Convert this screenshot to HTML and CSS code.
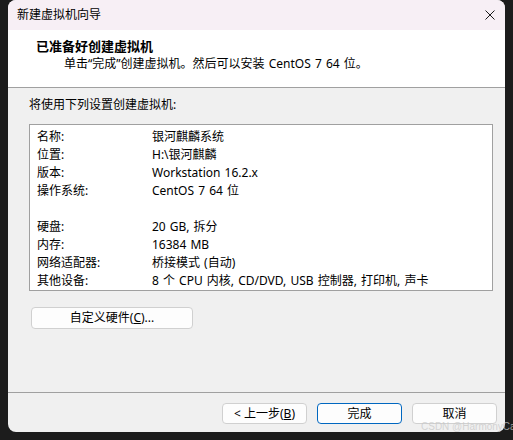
FILE: index.html
```html
<!DOCTYPE html>
<html lang="zh-CN">
<head>
<meta charset="utf-8">
<title>新建虚拟机向导</title>
<link rel="stylesheet" href="styles.css">
</head>
<body>
<div class="window">
  <div class="titlebar">
    <span class="title">新建虚拟机向导</span>
    <svg class="close" width="10" height="10" viewBox="0 0 10 10"><path d="M0.5 0.5 L9.5 9.5 M9.5 0.5 L0.5 9.5" stroke="#1a1a1a" stroke-width="1" fill="none"/></svg>
  </div>
  <div class="header">
    <div class="h-title">已准备好创建虚拟机</div>
    <div class="h-sub">单击“完成”创建虚拟机。然后可以安装 CentOS 7 64 位。</div>
  </div>
  <div class="content">
    <div class="intro">将使用下列设置创建虚拟机:</div>
    <div class="listbox">
      <div class="row"><span class="k">名称:</span><span class="v">银河麒麟系统</span></div>
      <div class="row"><span class="k">位置:</span><span class="v">H:\银河麒麟</span></div>
      <div class="row"><span class="k">版本:</span><span class="v">Workstation 16.2.x</span></div>
      <div class="row"><span class="k">操作系统:</span><span class="v">CentOS 7 64 位</span></div>
      <div class="row"></div>
      <div class="row"><span class="k">硬盘:</span><span class="v">20 GB, 拆分</span></div>
      <div class="row"><span class="k">内存:</span><span class="v">16384 MB</span></div>
      <div class="row"><span class="k">网络适配器:</span><span class="v">桥接模式 (自动)</span></div>
      <div class="row"><span class="k">其他设备:</span><span class="v">8 个 CPU 内核, CD/DVD, USB 控制器, 打印机, 声卡</span></div>
    </div>
    <button class="btn custom">自定义硬件(<u>C</u>)...</button>
  </div>
  <div class="footer">
    <button class="btn">&lt; 上一步(<u>B</u>)</button>
    <button class="btn primary">完成</button>
    <button class="btn">取消</button>
  </div>
</div>
<div class="watermark">CSDN @HarmonyCat</div>
</body>
</html>
```
FILE: styles.css
```css
html, body {
  margin: 0;
  padding: 0;
}
body {
  width: 513px;
  height: 440px;
  background: #1c1c1c;
  font-family: "Noto Sans", "Noto Sans CJK SC", sans-serif;
  font-size: 12px;
  color: #000;
  position: relative;
  overflow: hidden;
}
.window {
  margin-left: 8px;
  width: 497px;
  height: 432px;
  background: #f0f0f0;
  border-radius: 8px;
  overflow: hidden;
  display: flex;
  flex-direction: column;
}
.titlebar {
  height: 30px;
  flex: none;
  background: #f7eff5;
  display: flex;
  align-items: center;
  justify-content: space-between;
  padding: 0 10px 0 9px;
}
.title {
  line-height: 18px;
}
.close {
  display: block;
  margin-bottom: 1px;
}
.header {
  flex: none;
  background: #fff;
  border-bottom: 1px solid #a0a0a0;
  box-sizing: border-box;
  height: 58px;
}
.h-title {
  font-weight: bold;
  font-size: 13px;
  line-height: 18px;
  padding: 7px 0 0 28px;
}
.h-sub {
  line-height: 18px;
  padding-left: 56px;
  word-spacing: 1px;
}
.content {
  flex: 1;
  padding: 8px 0 0 21px;
  display: flex;
  flex-direction: column;
  align-items: flex-start;
}
.intro {
  line-height: 18px;
}
.listbox {
  margin-top: 10px;
  width: 464px;
  height: 167px;
  box-sizing: border-box;
  background: #fff;
  border: 1px solid #a0a0a0;
  padding: 3px 0 0 7px;
}
.row {
  display: flex;
  height: 18px;
  line-height: 18px;
}
.k {
  width: 115px;
  flex: none;
}
.v {
  word-spacing: 1px;
}
.btn {
  font: inherit;
  color: #000;
  background: #fdfdfd;
  border: 1px solid #d0d0d0;
  border-radius: 4px;
  padding: 0;
  line-height: 18px;
  height: 21px;
  width: 85px;
}
.btn u {
  text-decoration: underline;
  text-underline-offset: 1px;
}
.custom {
  margin-top: 16px;
  margin-left: 2px;
  width: 162px;
  height: 22px;
}
.primary {
  border-color: #0067c0;
}
.footer {
  height: 40px;
  flex: none;
  border-top: 1px solid #a0a0a0;
  display: flex;
  justify-content: flex-end;
  gap: 10px;
  padding: 10px 8px 0 0;
  box-sizing: border-box;
}
.watermark {
  position: absolute;
  left: 421px;
  top: 421px;
  font-family: "Liberation Sans", sans-serif;
  font-size: 10px;
  line-height: 12px;
  white-space: nowrap;
  color: rgba(200, 200, 200, 0.75);
}
```
